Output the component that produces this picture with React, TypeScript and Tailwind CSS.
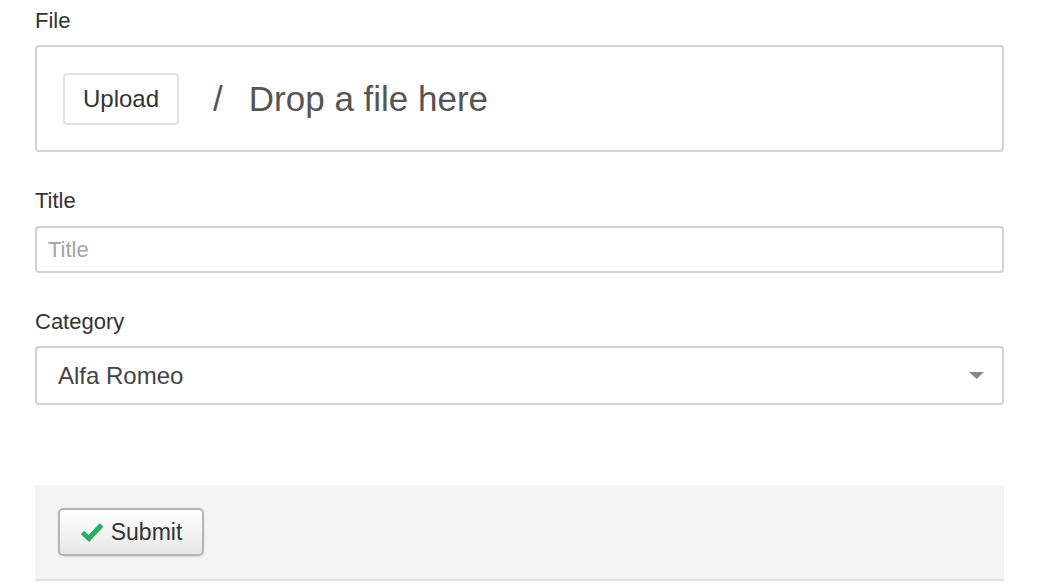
const font = { fontFamily: '"Liberation Sans", Arial, sans-serif' };

function Label({ children }: { children: string }) {
  return <div className="h-[30px] text-[22px] leading-[30px] text-[#333]">{children}</div>;
}

export default function App() {
  return (
    <div className="w-[1038px] h-[583px] bg-white overflow-hidden" style={font}>
      <div className="ml-[35px] w-[969px] pt-[6px]">
        {/* File */}
        <Label>File</Label>
        <div className="mt-[9px] h-[107px] rounded-[4px] border-2 border-[#d2d2d2] flex items-center pl-[26px]">
          <button className="h-[52px] px-[18px] rounded-[4px] border-2 border-[#e2e2e2] bg-white text-[24px] text-[#333]">
            Upload
          </button>
          <span className="ml-[34px] mt-[2px] text-[35px] text-[#555]">/</span>
          <span className="ml-[26px] mt-[2px] text-[35px] text-[#555]">Drop a file here</span>
        </div>

        {/* Title */}
        <div className="mt-[34px]">
          <Label>Title</Label>
        </div>
        <input
          placeholder="Title"
          className="mt-[10px] block w-full h-[47px] rounded-[4px] border-2 border-[#d2d2d2] px-[11px] text-[22px] text-[#444] placeholder:text-[#a5a5a5] outline-none"
        />

        {/* Category */}
        <div className="mt-[34px]">
          <Label>Category</Label>
        </div>
        <div className="mt-[9px] h-[59px] rounded-[4px] border-2 border-[#d2d2d2] flex items-center justify-between pl-[21px] pr-[18px]">
          <span className="text-[24px] text-[#444]">Alfa Romeo</span>
          <svg width="15" height="8" viewBox="0 0 15 8" className="mt-[1px]">
            <polygon points="0,0 15,0 7.5,7" fill="#888" />
          </svg>
        </div>

        {/* Actions */}
        <div className="mt-[80px] h-[96px] bg-[#f4f4f4] border-b-2 border-[#e0e0e0] pt-[23px] pl-[23px]">
          <button className="h-[48px] w-[146px] rounded-[5px] border-2 border-[#b5b5b5] bg-gradient-to-b from-white to-[#e8e8e8] flex items-center justify-center gap-[7px] text-[23px] text-[#333] shadow-[0_1px_2px_rgba(0,0,0,0.1)]">
            <svg width="24" height="20" viewBox="0 0 24 20">
              <polyline points="2.5,10.5 9,16.5 21.5,3" fill="none" stroke="#27ae60" strokeWidth="5" strokeLinejoin="miter" />
            </svg>
            Submit
          </button>
        </div>
      </div>
    </div>
  );
}
